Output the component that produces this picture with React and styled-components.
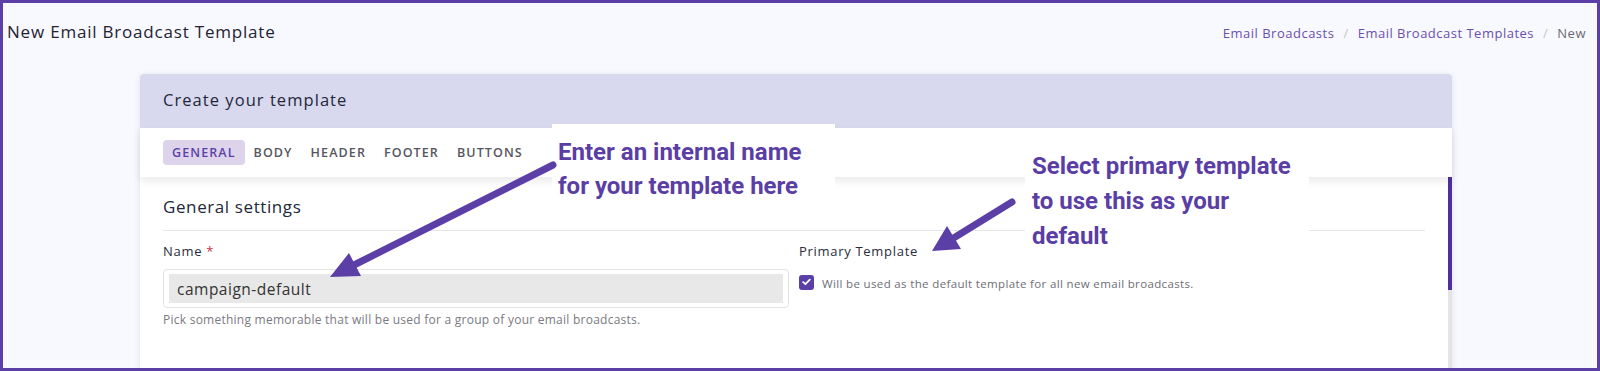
import React from "react";
import styled, { createGlobalStyle } from "styled-components";

const Global = createGlobalStyle`
  html, body { margin: 0; padding: 0; background: #f8f9fe; }
  body { font-family: "Open Sans", "Liberation Sans", sans-serif; }
  * { box-sizing: border-box; }
`;

const PURPLE = "#5b3fa6";
const UI_FONT = `"Open Sans", "Liberation Sans", sans-serif`;

const Root = styled.div`
  position: relative;
  width: 1600px;
  height: 371px;
`;

const Frame = styled.div`
  width: 100%;
  height: 100%;
  border: 3px solid ${PURPLE};
  background: #f8f9fe;
  overflow: hidden;
  font-family: ${UI_FONT};
`;

const TopBar = styled.div`
  height: 56px;
  display: flex;
  align-items: center;
  justify-content: space-between;
  padding: 0 11px 0 4px;
`;

const PageTitle = styled.h1`
  margin: 0;
  font-size: 17px;
  font-weight: 500;
  letter-spacing: 0.8px;
  color: #1f2333;
`;

const Crumbs = styled.nav`
  display: flex;
  align-items: center;
  gap: 9px;
  font-size: 13px;
  letter-spacing: 0.5px;
  padding-top: 4px;
`;

const Crumb = styled.span`
  color: ${(p) => (p.$current ? "#6b6b73" : "#6a4fb0")};
`;

const Sep = styled.span`
  color: #c4c4cc;
`;

const Card = styled.section`
  margin: 15px 0 0 137px;
  width: 1312px;
  box-shadow: 0 1px 6px rgba(30, 30, 60, 0.1);
  border-radius: 4px 4px 0 0;
`;

const CardHeader = styled.header`
  height: 54px;
  background: #d8d9ee;
  border-radius: 4px 4px 0 0;
  display: flex;
  align-items: center;
  padding: 0 0 4px 23px;
  font-size: 16.5px;
  font-weight: 500;
  letter-spacing: 1.05px;
  color: #23273a;
`;

const TabBar = styled.div`
  position: relative;
  z-index: 1;
  height: 49px;
  background: #fff;
  display: flex;
  align-items: center;
  padding: 0 23px;
  box-shadow: 0 4px 8px rgba(20, 20, 40, 0.09);
`;

const Tab = styled.button`
  border: 0;
  font-family: ${UI_FONT};
  font-size: 12.5px;
  font-weight: 600;
  letter-spacing: 1.1px;
  text-transform: uppercase;
  height: 25px;
  padding: 0 9px;
  margin-right: 0;
  border-radius: 4px;
  background: ${(p) => (p.$active ? "#ddd4ec" : "transparent")};
  color: ${(p) => (p.$active ? "#5b3fa6" : "#55565e")};
`;

const Body = styled.div`
  display: flex;
  background: #fff;
  height: 200px;
`;

const Content = styled.div`
  flex: 1;
  padding: 20px 23px 0 23px;
`;

const Scrollbar = styled.div`
  width: 4px;
  background: #e4e4e6;
  display: flex;
  flex-direction: column;
`;

const Thumb = styled.div`
  height: 113px;
  background: #4e2f9c;
`;

const SectionTitle = styled.h2`
  margin: 0;
  font-size: 17px;
  line-height: 20px;
  font-weight: 500;
  letter-spacing: 0.6px;
  color: #23273a;
  padding-bottom: 13px;
  border-bottom: 1px solid #e6e6ea;
`;

const Columns = styled.div`
  display: grid;
  grid-template-columns: 626px 1fr;
  gap: 10px;
  padding-top: 12px;
`;

const Field = styled.div`
  display: flex;
  flex-direction: column;
`;

const Label = styled.label`
  font-size: 13px;
  line-height: 16px;
  font-weight: 500;
  letter-spacing: 0.7px;
  color: #2a2d3a;
  margin-bottom: 10px;
`;

const Req = styled.span`
  color: #d0314b;
  margin-left: 4px;
`;

const InputBox = styled.div`
  height: 39px;
  border: 1px solid #e3e3e6;
  border-radius: 4px;
  padding: 4px 5px;
`;

const TextInput = styled.input`
  width: 100%;
  height: 100%;
  border: 0;
  outline: 0;
  background: #e8e8e8;
  padding: 0 8px;
  font-family: ${UI_FONT};
  font-size: 15.5px;
  letter-spacing: 0.5px;
  color: #333;
`;

const Help = styled.p`
  margin: 4px 0 0;
  font-size: 12px;
  line-height: 16px;
  letter-spacing: 0.25px;
  color: #7a7a80;
`;

const CheckRow = styled.div`
  display: flex;
  align-items: center;
  gap: 8px;
  margin-top: 4px;
`;

const CheckBox = styled.span`
  width: 15px;
  height: 15px;
  border-radius: 3px;
  background: ${PURPLE};
  display: flex;
  align-items: center;
  justify-content: center;
`;

const CheckText = styled.span`
  font-size: 11.5px;
  letter-spacing: 0.35px;
  color: #6e6e75;
  padding-top: 3px;
`;

const Overlay = styled.div`
  position: absolute;
  inset: 0;
  z-index: 5;
  pointer-events: none;
`;

const Note = styled.div`
  position: absolute;
  left: ${(p) => p.$x}px;
  top: ${(p) => p.$y}px;
  width: ${(p) => p.$w}px;
  height: ${(p) => p.$h}px;
  padding: ${(p) => p.$pad};
  background: #fff;
  font-family: Roboto, "Liberation Sans", sans-serif;
  font-weight: 700;
  font-size: 24px;
  line-height: ${(p) => p.$lh}px;
  color: #5a3ea5;
  white-space: nowrap;
`;

const Arrows = styled.svg`
  position: absolute;
  left: 0;
  top: 0;
`;

export default function App() {
  return (
    <Root>
      <Global />
      <Frame>
        <TopBar>
          <PageTitle>New Email Broadcast Template</PageTitle>
          <Crumbs>
            <Crumb>Email Broadcasts</Crumb>
            <Sep>/</Sep>
            <Crumb>Email Broadcast Templates</Crumb>
            <Sep>/</Sep>
            <Crumb $current>New</Crumb>
          </Crumbs>
        </TopBar>
        <Card>
          <CardHeader>Create your template</CardHeader>
          <TabBar>
            <Tab $active>General</Tab>
            <Tab>Body</Tab>
            <Tab>Header</Tab>
            <Tab>Footer</Tab>
            <Tab>Buttons</Tab>
          </TabBar>
          <Body>
            <Content>
              <SectionTitle>General settings</SectionTitle>
              <Columns>
                <Field>
                  <Label>
                    Name<Req>*</Req>
                  </Label>
                  <InputBox>
                    <TextInput defaultValue="campaign-default" readOnly />
                  </InputBox>
                  <Help>Pick something memorable that will be used for a group of your email broadcasts.</Help>
                </Field>
                <Field>
                  <Label>Primary Template</Label>
                  <CheckRow>
                    <CheckBox>
                      <svg width="9" height="8" viewBox="0 0 9 8">
                        <path d="M1.2 4.2 L3.4 6.2 L7.8 1.6" fill="none" stroke="#fff" strokeWidth="1.8" strokeLinecap="round" strokeLinejoin="round" />
                      </svg>
                    </CheckBox>
                    <CheckText>Will be used as the default template for all new email broadcasts.</CheckText>
                  </CheckRow>
                </Field>
              </Columns>
            </Content>
            <Scrollbar>
              <Thumb />
            </Scrollbar>
          </Body>
        </Card>
      </Frame>
      <Overlay>
        <Note $x={552} $y={124} $w={283} $h={80} $lh={34} $pad="11px 0 0 6px">
          Enter an internal name
          <br />
          for your template here
        </Note>
        <Note $x={1025} $y={148} $w={284} $h={102} $lh={35} $pad="1px 0 0 7px">
          Select primary template
          <br />
          to use this as your
          <br />
          default
        </Note>
        <Arrows width="1600" height="371" viewBox="0 0 1600 371">
          <line x1="553" y1="165" x2="352" y2="266" stroke="#5b3fa6" strokeWidth="7" strokeLinecap="round" />
          <polygon points="330,277 349,253 361,276" fill="#5b3fa6" />
          <line x1="1012" y1="202" x2="952" y2="239" stroke="#5b3fa6" strokeWidth="7" strokeLinecap="round" />
          <polygon points="932,251 947,226 961,249" fill="#5b3fa6" />
        </Arrows>
      </Overlay>
    </Root>
  );
}
